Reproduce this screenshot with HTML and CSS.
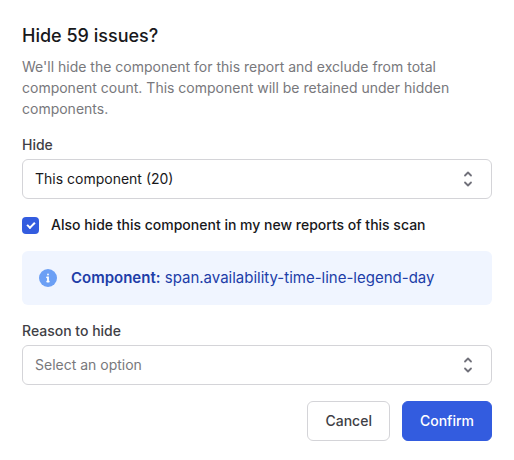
FILE: index.html
```html
<!DOCTYPE html>
<html lang="en">
<head>
    <meta charset="UTF-8">
    <meta name="viewport" content="width=device-width, initial-scale=1.0">
    <title>Hide issues</title>
    <link rel="stylesheet" href="styles.css">
</head>
<body>
    <main class="modal">
        <h1>Hide 59 issues?</h1>
        <p class="description">We'll hide the component for this report and exclude from total component count. This component will be retained under hidden components.</p>

        <form id="hide-form">
            <label class="field-label" for="hide">Hide</label>
            <div class="select-box">
                <select id="hide">
                    <option>This component (20)</option>
                </select>
                <svg class="chevrons" viewBox="0 0 12 18" aria-hidden="true">
                    <path d="M3 5.5 6 2.5 9 5.5M3 12.5 6 15.5 9 12.5" />
                </svg>
            </div>

            <div class="check-row">
                <input type="checkbox" id="new-reports" checked>
                <label for="new-reports">Also hide this component in my new reports of this scan</label>
            </div>

            <div class="notice">
                <svg class="info" viewBox="0 0 18 18" aria-hidden="true">
                    <circle cx="9" cy="9" r="9" />
                    <path d="M9 5.4v.1M8 8.3h1v4.2M8.2 12.5h1.6" />
                </svg>
                <span><strong>Component:</strong> span.availability-time-line-legend-day</span>
            </div>

            <label class="field-label" for="reason">Reason to hide</label>
            <div class="select-box">
                <select id="reason" class="placeholder">
                    <option>Select an option</option>
                </select>
                <svg class="chevrons" viewBox="0 0 12 18" aria-hidden="true">
                    <path d="M3 5.5 6 2.5 9 5.5M3 12.5 6 15.5 9 12.5" />
                </svg>
            </div>

            <div class="actions">
                <button type="button" class="cancel">Cancel</button>
                <button type="submit" class="confirm">Confirm</button>
            </div>
        </form>
    </main>
</body>
</html>
```

FILE: styles.css
```css
body {
    font-family: Inter, "Liberation Sans", sans-serif;
    font-size: 14px;
    font-optical-sizing: none;
    line-height: 20px;
    margin: 0;
    color: #18181b;
    background-color: #fff;
}

.modal {
    padding: 24px 22px 20px;
}

h1 {
    margin: 0 0 8px;
    font-size: 18px;
    font-weight: 500;
    line-height: 24px;
}

.description {
    margin: 0 0 16px;
    line-height: 21px;
    color: #78787c;
}

.field-label {
    display: block;
    margin-bottom: 4px;
    font-weight: 500;
    color: #3f3f46;
}

.select-box {
    display: grid;
    align-items: center;
}

.select-box select,
.chevrons {
    grid-area: 1 / 1;
}

select {
    width: 100%;
    height: 40px;
    padding: 0 12px;
    border: 1px solid #d4d4d8;
    border-radius: 6px;
    appearance: none;
    font: inherit;
    color: #18181b;
    background-color: #fff;
}

select.placeholder {
    color: #78787c;
}

.chevrons {
    justify-self: end;
    width: 12px;
    height: 18px;
    margin-right: 18px;
    pointer-events: none;
    fill: none;
    stroke: #71717a;
    stroke-width: 1.8;
    stroke-linecap: round;
    stroke-linejoin: round;
}

.check-row {
    display: flex;
    align-items: center;
    gap: 12px;
    margin: 16px 0;
    font-weight: 500;
}

.check-row input {
    display: grid;
    place-items: center;
    width: 17px;
    height: 17px;
    margin: 0;
    border-radius: 4px;
    appearance: none;
    background-color: #335cdf;
}

.check-row input:checked::before {
    content: "";
    width: 6px;
    height: 3px;
    border: solid #fff;
    border-width: 0 0 2px 2px;
    transform: translateY(-1px) rotate(-45deg);
}

.notice {
    display: flex;
    align-items: center;
    gap: 14px;
    margin-bottom: 16px;
    padding: 17px;
    border-radius: 6px;
    font-size: 15px;
    font-optical-sizing: auto;
    color: #203da8;
    background-color: #f0f5ff;
}

.notice strong {
    font-weight: 600;
}

.info {
    width: 18px;
    height: 18px;
    fill: #6b9ff5;
}

.info path {
    fill: none;
    stroke: #fff;
    stroke-width: 1.8;
    stroke-linecap: round;
}

.actions {
    display: flex;
    justify-content: flex-end;
    gap: 12px;
    margin-top: 16px;
}

button {
    height: 40px;
    padding: 0 17px;
    border: 1px solid #d4d4d8;
    border-radius: 6px;
    font: inherit;
    font-weight: 500;
    cursor: pointer;
}

.cancel {
    color: #3f3f46;
    background-color: #fff;
}

.confirm {
    border-color: #335cdf;
    color: #fff;
    background-color: #335cdf;
}
```
